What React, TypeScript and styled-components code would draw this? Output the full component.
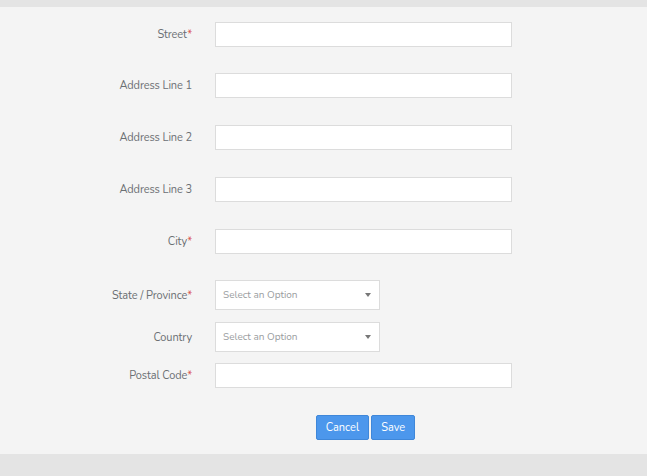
import React from "react";
import styled, { createGlobalStyle } from "styled-components";

const GlobalStyle = createGlobalStyle`
  body {
    margin: 0;
    background: #e4e4e4;
    font-family: "Nunito", "Open Sans", "Liberation Sans", sans-serif;
  }
`;

const Page = styled.div`
  padding-top: 7px;
  height: 476px;
  box-sizing: border-box;
`;

const Panel = styled.form`
  background: #f4f4f4;
  padding: 15px 0 14px;
`;

const Row = styled.div<{ gap: number }>`
  display: flex;
  align-items: center;
  margin-bottom: ${({ gap }) => gap}px;
`;

const Label = styled.label`
  width: 192px;
  text-align: right;
  margin-right: 23px;
  font-size: 11px;
  color: #6b6f73;
  letter-spacing: -0.1px;
`;

const Required = styled.span`
  color: #d9534f;
`;

const TextInput = styled.input`
  box-sizing: border-box;
  width: 297px;
  height: 25px;
  border: 1px solid #dcdcdc;
  background: #fff;
  outline: none;
  margin: 0;
`;

const SelectBox = styled.div`
  box-sizing: border-box;
  width: 165px;
  height: 30px;
  border: 1px solid #dcdcdc;
  background: #fff;
  display: flex;
  align-items: center;
  justify-content: space-between;
  padding: 0 8px 0 7px;
  font-size: 10px;
  color: #9a9da0;
`;

const Caret = styled.span`
  width: 0;
  height: 0;
  border-left: 3px solid transparent;
  border-right: 3px solid transparent;
  border-top: 4px solid #777;
`;

const Actions = styled.div`
  margin-left: 215px;
  width: 297px;
  display: flex;
  justify-content: center;
  gap: 2px;
  padding-left: 4px;
  box-sizing: border-box;
`;

const Button = styled.button`
  height: 25px;
  padding: 0 9px;
  background: #4c97ec;
  border: 1px solid #3f87d9;
  border-radius: 2px;
  color: #fff;
  font-family: inherit;
  font-size: 11px;
  cursor: pointer;
`;

const textFields = [
  { label: "Street", required: true, gap: 26 },
  { label: "Address Line 1", gap: 27 },
  { label: "Address Line 2", gap: 27 },
  { label: "Address Line 3", gap: 27 },
  { label: "City", required: true, gap: 26 },
];

const App: React.FC = () => {
  return (
    <Page>
      <GlobalStyle />
      <Panel onSubmit={(e) => e.preventDefault()}>
        {textFields.map((f) => (
          <Row key={f.label} gap={f.gap}>
            <Label>
              {f.label}
              {f.required && <Required>*</Required>}
            </Label>
            <TextInput type="text" />
          </Row>
        ))}
        <Row gap={12}>
          <Label>
            State / Province<Required>*</Required>
          </Label>
          <SelectBox>
            Select an Option
            <Caret />
          </SelectBox>
        </Row>
        <Row gap={11}>
          <Label>Country</Label>
          <SelectBox>
            Select an Option
            <Caret />
          </SelectBox>
        </Row>
        <Row gap={27}>
          <Label>
            Postal Code<Required>*</Required>
          </Label>
          <TextInput type="text" />
        </Row>
        <Actions>
          <Button type="button">Cancel</Button>
          <Button type="submit">Save</Button>
        </Actions>
      </Panel>
    </Page>
  );
};

export default App;
